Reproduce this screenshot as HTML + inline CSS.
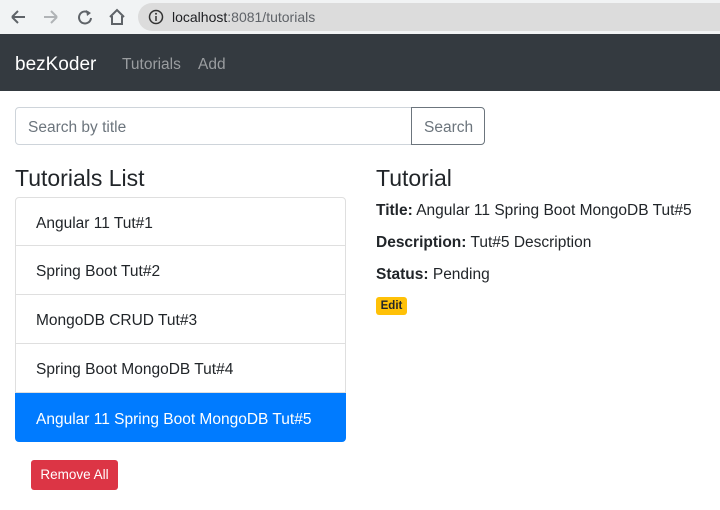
<!DOCTYPE html>
<html><head><style>
*{box-sizing:border-box;margin:0;padding:0}
body{width:720px;height:510px;overflow:hidden;background:#fff;font-family:"Liberation Sans",sans-serif;color:#212529;position:relative}
.a{position:absolute}
.chrome{left:0;top:0;width:720px;height:34px;background:#f1f3f4}
.pill{left:138px;top:3px;width:600px;height:28px;border-radius:14px;background:#dcdcdc}
.nav{left:0;top:34px;width:720px;height:57px;background:#343a40}
.li{position:absolute;left:15px;width:331px;height:49px;border:1px solid #dfdfdf;font-size:15.5px;padding-left:20px;line-height:51px}
p.f{font-size:15.5px;position:absolute;left:376px}
</style></head><body>
<div class="a chrome"></div>
<svg class="a" style="left:8px;top:7px" width="130" height="20" viewBox="0 0 130 20">
<path d="M4 10h13M4 10l6-6M4 10l6 6" stroke="#5f6368" stroke-width="2" fill="none"/>
<path d="M36 10h13M49 10l-6-6M49 10l-6 6" stroke="#b0b3b6" stroke-width="2" fill="none"/>
<path d="M81 6a6 6 0 1 0 2 5" stroke="#5f6368" stroke-width="2" fill="none"/><path d="M78 3l5 3-4 3z" fill="#5f6368"/>
<path d="M102 10l7-7 7 7M104 9v8h10v-8" stroke="#5f6368" stroke-width="2" fill="none"/>
</svg>
<div class="a pill"></div>
<svg class="a" style="left:148px;top:9px" width="16" height="16"><circle cx="8" cy="8" r="6.5" stroke="#333" stroke-width="1.5" fill="none"/><path d="M8 7v5" stroke="#333" stroke-width="1.5"/><circle cx="8" cy="4.8" r="1" fill="#333"/></svg>
<div class="a" style="left:172px;top:9px;font-size:14px;color:#202124">localhost<span style="color:#5f6368">:8081/tutorials</span></div>
<div class="a nav"></div>
<div class="a" style="left:15px;top:54px;font-size:19px;color:#fff">bezKoder</div>
<div class="a" style="left:122px;top:56px;font-size:15.5px;color:#9a9da0">Tutorials</div>
<div class="a" style="left:198px;top:56px;font-size:15.5px;color:#9a9da0">Add</div>
<div class="a" style="left:15px;top:107px;width:397px;height:38px;border:1px solid #ced4da;border-radius:4px 0 0 4px;font-size:15.5px;color:#6c757d;padding:11px 12px">Search by title</div>
<div class="a" style="left:411px;top:107px;width:74px;height:38px;border:1px solid #6c757d;border-radius:0 4px 4px 0;font-size:15.5px;color:#6c757d;padding:11px 12px">Search</div>
<div class="a" style="left:15px;top:165px;font-size:23px">Tutorials List</div>
<div class="li" style="top:197px;border-radius:4px 4px 0 0">Angular 11 Tut#1</div>
<div class="li" style="top:246px;border-top:none">Spring Boot Tut#2</div>
<div class="li" style="top:295px;border-top:none">MongoDB CRUD Tut#3</div>
<div class="li" style="top:344px;border-top:none">Spring Boot MongoDB Tut#4</div>
<div class="li" style="top:393px;background:#007bff;border-color:#007bff;color:#fff;border-radius:0 0 4px 4px">Angular 11 Spring Boot MongoDB Tut#5</div>
<div class="a" style="left:31px;top:460px;width:87px;height:30px;background:#dc3545;border-radius:3px;color:#fff;font-size:13.5px;line-height:30px;text-align:center">Remove All</div>
<div class="a" style="left:376px;top:165px;font-size:23px">Tutorial</div>
<p class="f" style="top:202px"><b>Title:</b> Angular 11 Spring Boot MongoDB Tut#5</p>
<p class="f" style="top:234px"><b>Description:</b> Tut#5 Description</p>
<p class="f" style="top:266px"><b>Status:</b> Pending</p>
<div class="a" style="left:376px;top:297px;width:31px;height:18px;background:#ffc107;border-radius:3px;font-size:11.5px;font-weight:bold;line-height:18px;text-align:center">Edit</div>
</body></html>
